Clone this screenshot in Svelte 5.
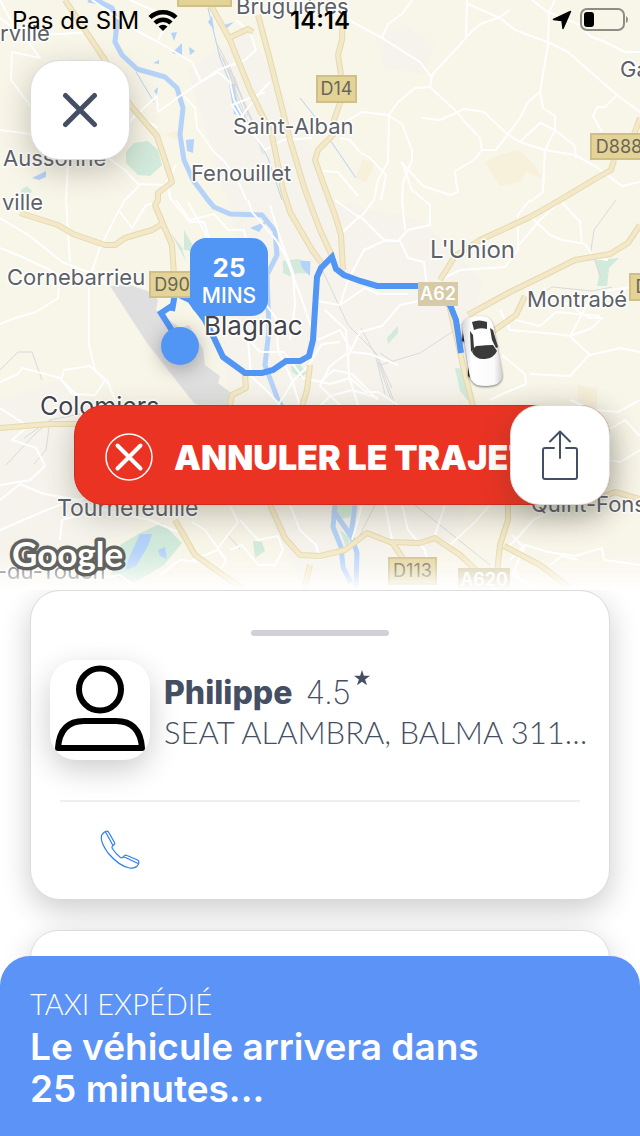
<script>
  let carrier = 'Pas de SIM';
  let time = '14:14';
  let eta = 25;
  let driver = { name: 'Philippe', rating: '4.5', vehicle: 'SEAT ALAMBRA, BALMA 311ABC' };

  const minorRoads = [
    '0,18 24,36 40,58 12,52 11,80 32,108',
    '0,0 18,34 60,34 90,32',
    '92,0 132,28 158,42 192,62 201,82',
    '130,0 170,18 158,40',
    '158,128 136,114 129,122 157,96 158,112 180,96 218,70 245,60 256,50 250,32 236,20',
    '184,96 195,108 197,128 214,152 225,162 240,185 246,200',
    '201,82 218,72 230,82 234,100 246,122 265,150 283,140 312,138',
    '265,92 232,105 240,118 262,90 270,82',
    '0,130 30,134 68,162 66,200 70,262',
    '100,152 125,170 138,184 165,185 176,165',
    '140,185 125,200 118,212 99,250 89,280 89,345 95,370 108,382 115,400',
    '0,218 30,236 62,262 88,272 110,286',
    '0,248 20,256 50,270 60,276 58,298 36,312 15,318 0,324',
    '120,212 132,228 146,205 160,202',
    '0,382 18,374 22,368 60,378 72,394 95,395 105,380 90,366 64,370 61,380 76,394',
    '0,408 28,426 12,440 36,448 45,466 30,480 0,485',
    '0,500 20,484 44,494 80,500 100,490',
    '0,530 42,512 72,500 112,512 150,520 178,532',
    '60,540 62,520 90,512 130,506 165,506',
    '167,165 170,198 190,222 204,222 210,240 225,244',
    '176,200 190,220 214,214 228,230 244,230 250,260',
    '188,202 212,246 226,252 250,252',
    '248,200 252,212 276,240 285,255 302,300 312,330',
    '270,205 280,238 293,272 295,305 290,340',
    '252,286 276,318 278,350 292,380 300,406',
    '240,330 260,352 284,352 303,378 330,384',
    '230,320 248,340 251,376 266,390 280,405',
    '278,405 294,380 308,366 322,344 340,342',
    '312,300 340,305 365,288 378,294 408,294',
    '318,340 340,330 352,352 370,354 398,365',
    '325,310 346,330 349,376 358,405',
    '330,384 350,378 366,392 378,392 398,405',
    '348,356 360,332 382,326 400,305 424,300',
    '320,382 334,370 352,374 378,400',
    '346,354 330,366 320,386 340,405',
    '340,305 348,280 364,250 386,240 400,241 408,258 424,262 428,298',
    '343,232 360,216 385,241 398,241 408,230 430,225 430,205 412,190 402,162',
    '335,200 360,218 374,200 378,180 388,162 389,115 398,102 415,88 430,87 432,75 455,50 466,38 467,0',
    '430,87 457,112 465,122 480,138 482,150 474,160 455,171 456,182 458,192 450,195 423,186 401,162',
    '381,200 386,175 370,158 360,152 350,140 340,138',
    '320,171 338,172 358,196',
    '340,125 362,112 388,115 402,124 412,150 412,160 403,182 402,200 405,230',
    '422,118 440,120 456,113 464,109 484,112 507,134 520,142 545,150 575,155 595,166 622,186 640,182',
    '482,150 496,150 508,134 520,118 528,102 540,92 548,45 549,12 555,0',
    '540,92 543,108 555,116 555,130 575,146 576,158',
    '520,142 540,123 555,130 545,150 544,170 543,192 530,202',
    '345,18 382,38 420,62 432,78',
    '382,38 388,24 402,14 412,0',
    '466,3 500,18 515,30 550,43 568,52 617,95 640,112',
    '532,0 548,12 578,24 590,36 605,42 625,52 640,52',
    '467,36 480,24 498,18 510,10',
    '617,95 605,107 597,107 593,116 602,132',
    '440,280 460,270 505,267 518,250 518,215 530,200',
    '518,246 540,220 562,200',
    '532,218 550,235 562,240 585,244 595,258 608,260',
    '582,244 580,222 560,200',
    '500,310 510,330 556,334 570,336 590,355 620,348 640,352',
    '560,300 590,318 602,318 592,328 570,336',
    '502,355 525,374 526,384 500,395 490,400',
    '530,374 570,376 590,354',
    '570,336 590,300 610,290 640,286',
    '515,320 540,326 556,312 600,316',
    '320,406 330,396 352,390 378,398',
    '570,400 595,410 618,412 640,400',
    '608,430 625,420 640,436',
    '608,460 620,462 640,450',
    '230,506 238,522 218,548 225,558 205,530 192,522',
    '240,520 258,540 278,536 283,550 275,565 258,565 242,545 230,550',
    '192,560 218,550 226,560 220,570',
    '290,505 300,530 316,545 320,560',
    '352,540 358,520 362,505',
    '385,505 392,540 400,560',
    '402,505 408,530 425,550 428,565',
    '445,505 435,535 450,545 475,522 490,505',
    '505,550 520,535 533,520 550,512',
    '510,560 525,545 548,552 575,556 602,548 604,560 640,565',
    '512,535 524,548 512,575 540,590',
    '515,570 520,580',
    '550,565 562,556 578,560',
    '160,575 180,560 200,562',
    '90,580 120,575 140,590'
  ];

  const mainRoads = [
    '65,0 105,60 130,105 157,136 165,160 172,182 158,193 158,200 155,205 163,224 172,245 175,290',
    '20,213 58,225 73,234 105,245 115,245 125,238 152,230 162,224',
    '208,0 230,40 250,90 272,135 283,190 290,212 312,250 325,268',
    '258,15 270,60 290,140 305,190 320,230 332,256',
    '229,38 248,29 253,32',
    '343,18 342,40 338,55 341,75 341,100 334,120 333,135 318,150 315,160 322,180 335,215 341,235 343,270',
    '640,118 632,140',
    '614,160 611,170 595,179 560,200 530,217 480,240 455,256 440,280',
    '640,225 628,243 610,254 575,260 545,275 510,292 468,315',
    '525,296 516,315 492,332',
    '448,300 456,335 464,370 473,406',
    '0,428 50,424 78,424',
    '175,520 195,555 230,580 245,590',
    '270,505 285,538 300,555 320,556 345,550 367,533 390,542 420,543 435,538 460,555 478,572',
    '392,542 405,562',
    '508,505 508,520 500,545 497,572',
    '504,546 540,565 570,588',
    '310,565 304,590',
    '245,375 246,388 232,395 230,405',
    '310,365 307,390 302,406',
    '600,498 615,492 640,499'
  ];

  const labels = [
    { text: 'rville', x: 0, y: 41, size: 22 },
    { text: 'Bruguières', x: 236, y: 14, size: 22 },
    { text: 'Saint-Alban', x: 233, y: 134, size: 22 },
    { text: 'Fenouillet', x: 191, y: 181, size: 22 },
    { text: 'Aussonne', x: 3, y: 166, size: 22 },
    { text: 'ville', x: 2, y: 210, size: 22 },
    { text: 'Cornebarrieu', x: 7, y: 285, size: 22 },
    { text: "L'Union", x: 430, y: 258, size: 24 },
    { text: 'Montrabé', x: 527, y: 307, size: 22 },
    { text: 'Gar', x: 620, y: 77, size: 22 },
    { text: 'Blagnac', x: 204, y: 335, size: 26, dark: true },
    { text: 'Colomiers', x: 40, y: 415, size: 25, dark: true },
    { text: 'Tournefeuille', x: 57, y: 516, size: 23 },
    { text: 'Quint-Fonsegrives', x: 531, y: 512, size: 22 },
    { text: '-du-Touch', x: -3, y: 579, size: 22 }
  ];

  const shields = [
    { text: 'D14', x: 317, y: 76, w: 39, h: 26 },
    { text: 'D888', x: 591, y: 134, w: 56, h: 25 },
    { text: 'D90', x: 150, y: 272, w: 44, h: 25 },
    { text: 'D', x: 630, y: 274, w: 24, h: 26 },
    { text: 'D113', x: 389, y: 558, w: 47, h: 26 },
    { text: 'A62', x: 418, y: 282, w: 40, h: 24, light: true },
    { text: 'A620', x: 458, y: 568, w: 52, h: 24, light: true },
    { text: '', x: 178, y: -18, w: 53, h: 24 }
  ];
</script>

<main class="screen">
  <section class="map-area">
    <svg class="map" viewBox="0 0 640 590" preserveAspectRatio="xMidYMid slice" aria-label="Carte du trajet">
      <defs>
        <linearGradient id="fade" x1="0" y1="0" x2="0" y2="1">
          <stop offset="0" stop-color="#fff" stop-opacity="0" />
          <stop offset="0.5" stop-color="#fff" stop-opacity="0.4" />
          <stop offset="1" stop-color="#fff" />
        </linearGradient>
        <linearGradient id="carBody" x1="0" x2="1">
          <stop offset="0" stop-color="#d4d4d4" />
          <stop offset="0.25" stop-color="#fff" />
          <stop offset="0.8" stop-color="#fafafa" />
          <stop offset="1" stop-color="#cfcfcf" />
        </linearGradient>
      </defs>
      <rect width="640" height="590" fill="#f8f5e9" />

      <!-- built-up areas -->
      <path class="urban" d="M188 70l60-40 60 110 24 60 90 20 60 60-20 120 20 90-60 90H300l-60-120-20-120 30-60z" />
      <path class="urban" d="M375 38l30-14 30 20-10 30-40-5zM0 400l60-20 50 30 30 120-140 40z" />

      <!-- parks -->
      <g fill="#d2eadb">
        <path d="M126 152l8-9 14-2 10 9 4 15-12 11-12-1-12-12z" />
        <path d="M21 190l6-4 5 5-4 6-7-1zM170 232l14 18 0-20 8 14 2 8-12-3 4 12z" />
        <path d="M283 261l14-2 14 3-1 12-12-1-9 3-6-3z" />
        <path d="M291 366l9-2 6 9-5 5-9-6zM595 260l24-2-10 10-2 18-10 0 2-10z" />
        <path d="M387 338l11-12 0 7-10 11zM455 368l8 1 4 12 1 20-8-10z" />
        <path d="M120 545l20-12 22-10 20 20-18 22-30 18-24-8 14-20z" />
        <path d="M332 505h22l-4 12-10 2zM340 530l10 8-3 12zM253 541l9 1 3 9-10 7z" />
      </g>
      <g fill="#f7f0da">
        <path d="M485 162l18-8 16-4 15 14 8 14-16-6-6 10-20 4z" />
        <path d="M362 160l12 2-2 8-6 12-10-4zM577 385l20 4v20l-18-4zM165 134l12-4v10z" />
      </g>

      <path class="airport" d="M110 286l20-1 20 7 8 8-2 10 24 18 9-3 14 24 2 16 15 11-2 7 13 10-3 20-33-9-5-6-43-55z" />
      <path class="airport" d="M186 390h42l-6 15-33-8z" />

      <!-- water -->
      <g fill="#b5d2f8">
        <path d="M208 22l4-6 2 14zM224 25l10-3-7 6zM171 33l6-1-3 9zM172 53l10-10v12zM189 47l6 4-5 4zM153 63l6-3v4zM154 91l4-4-1 8z" />
        <path d="M229 84h6l2 20 8 14-11-4zM186 140l8-1-1 14-6-2zM32 178l14-7v6l-7 3z" />
        <path d="M250 228l17-7-8 11zM300 261h10v15l-8-8zM128 560l12-26 12 0-4 12-12 20-10 4zM158 550l7-3 2 12-7-3z" />
      </g>
      <g class="river">
        <polyline points="88,0 100,2 112,8 117,22 115,42 122,55 137,69 165,77 177,88 183,108 180,135 184,160 193,180 208,200 214,207 230,214 262,215 275,231 277,255 267,275 269,330 265,365 278,400 283,408" />
        <path d="M335 505l-2 22 8 20 2 20 8 16M355 505l-4 30 6 18-1 35M333 510l18 26" />
      </g>
      <g class="stream">
        <path d="M136 72l18 30M208 8l12 50 20 50 28 50 14 42M330 140l26 38M283 200l26 40M300 98l16 20" />
      </g>
      <g class="rail">
        <path d="M215 40l16 30 20 50 12 34M218 50l20 40 14 30M223 58l24 62M228 66l8 30M230 70l22 50M234 76l14 40" />
        <path d="M320 265l28 60 28 28 20 54M361 328l14 26 10 40M376 354l16 34M378 362l14 40M380 365l40-12 35-23 14-12M398 365l-18-12" />
        <path d="M0 370l18-18 14 0 10 28M616 200l-22 30-3 20 10 28M540 295l12-8 40 4 20-4" />
        <path d="M24 438l26-18 30-6 M6 465l30-32 14-12M50 420l-4 30-12 14M375 505l-15 30M415 505l75 60M228 535l12 14" />
      </g>

      {#each minorRoads as points}
        <polyline class="minor" {points} />
      {/each}
      {#each mainRoads as points}
        <polyline class="main-edge" {points} />
      {/each}
      {#each mainRoads as points}
        <polyline class="main-road" {points} />
      {/each}

      <polyline class="route" points="178,340 161,313 173,305 172,311 175,293 190,300 205,320 215,340 223,357 245,373 262,373 273,370 286,361 300,361 309,356 313,340 317,277 321,268 332,257 336,269 344,275 360,281 377,286 425,286 450,305 456,320 461,353" />

      {#each shields as s}
        <rect class="shield" class:light={s.light} x={s.x} y={s.y} width={s.w} height={s.h} />
        <text class="shield-text" class:light={s.light} x={s.x + s.w / 2} y={s.y + s.h / 2 + 6}>{s.text}</text>
      {/each}
      {#each labels as l}
        <text class="place" class:dark={l.dark} x={l.x} y={l.y} font-size={l.size}>{l.text}</text>
      {/each}

      <!-- pick-up point -->
      <circle class="pin" cx="180" cy="346" r="19" />

      <!-- taxi -->
      <g class="car">
        <path d="M463 329l-1 12 3 1zM468 366l0 10 4 3z" fill="#222" />
        <path fill="url(#carBody)" d="M462 326q1-8 9-9 9-2 16 0 6 3 7 12l8 43q2 10-8 13-9 2-17 0-7-3-8-13z" />
        <path fill="#3a3a3a" d="M472 322q7-3 15 0v7q-7-2-13 1zM472 352q1-4 4-6 10-1 17-1l4 6q-3 7-12 8-9 1-13-7zM470 331l3 4 1 13-3 4zM490 328l3 2 5 17-2 1-4-8z" />
        <path fill="#fff" d="M474 332q7-3 15-1l3 13q-9 2-17 1z" />
      </g>

      <rect y="550" width="640" height="40" fill="url(#fade)" />
      <text class="google" x="12" y="567">Google</text>
    </svg>

    <div class="eta">
      <strong>{eta}</strong>
      <span>MINS</span>
    </div>

    <header class="status-bar">
      <div class="carrier">
        <span>{carrier}</span>
        <svg width="30" height="22" viewBox="0 0 30 22" aria-hidden="true">
          <g fill="none" stroke="#000" stroke-width="4.500">
            <path d="M2 8.500a18.500 18.500 0 0 1 26 0" />
            <path d="M7 14a11.500 11.500 0 0 1 16 0" />
          </g>
          <path d="M10.500 17.500a6.500 6.500 0 0 1 9 0L15 22z" />
        </svg>
      </div>
      <time>{time}</time>
      <div class="indicators">
        <svg width="20" height="20" viewBox="0 0 20 20" aria-hidden="true">
          <path stroke="#000" stroke-width="1.500" stroke-linejoin="round" d="M1.500 9.500L18.500 1.500 11 18.500 10 10.500z" />
        </svg>
        <svg width="48" height="24" viewBox="0 0 48 24" aria-hidden="true">
          <rect x="1" y="1" width="43" height="21" rx="6" fill="none" stroke="#8e8c86" stroke-width="2" />
          <rect x="4" y="4" width="10" height="15" rx="3" />
          <path d="M46 8q2 1 2 3.500T46 15z" fill="#8e8c86" />
        </svg>
      </div>
    </header>

    <button class="square close" type="button" aria-label="Fermer">
      <svg width="36" height="36" viewBox="0 0 36 36" fill="none" stroke="#454f63" stroke-width="5" stroke-linecap="round">
        <path d="M3.500 3.500l29 29M32.500 3.500l-29 29" />
      </svg>
    </button>

    <div class="actions">
      <button class="cancel" type="button">
        <svg width="48" height="48" viewBox="0 0 48 48" fill="none" stroke="#fff" stroke-linecap="round">
          <circle cx="24" cy="24" r="23" stroke-width="1.500" />
          <path d="M12.500 12.500l23 23M35.500 12.500l-23 23" stroke-width="4" />
        </svg>
        <span>ANNULER LE TRAJET</span>
      </button>
      <button class="square share" type="button" aria-label="Partager">
        <svg width="38" height="50" viewBox="0 0 38 50" fill="none" stroke="#454f63" stroke-width="2" stroke-linecap="round" stroke-linejoin="round">
          <path d="M13 18H4q-2 0-2 2v27q0 2 2 2h30q2 0 2-2V20q0-2-2-2h-9" />
          <path d="M19 28V2M9 11.500L19 1.500l10 10" />
        </svg>
      </button>
    </div>
  </section>

  <section class="sheet">
    <article class="card">
      <div class="handle"></div>
      <div class="driver">
        <div class="avatar">
          <svg width="100" height="100" viewBox="0 0 100 100" fill="none" stroke="#000" stroke-width="6">
            <circle cx="50" cy="29.500" r="21" />
            <path stroke-linejoin="round" d="M8 88Q10 61 34 61h32q24 0 26 27z" />
          </svg>
        </div>
        <div class="driver-info">
          <p class="driver-name">
            <strong>{driver.name}</strong>
            <span class="rating">{driver.rating}</span>
            <svg class="star" width="16" height="16" viewBox="0 0 16 16" aria-hidden="true">
              <path d="M8 0l1.900 5.800H16l-4.900 3.600 1.900 5.900L8 11.700l-5 3.600 1.900-5.900L0 5.800h6.100z" />
            </svg>
          </p>
          <p class="vehicle">{driver.vehicle}</p>
        </div>
      </div>
      <div class="contact">
        <button class="call" type="button" aria-label="Appeler le chauffeur">
          <svg width="40" height="40" viewBox="0 0 40 40" fill="none" stroke="#2f7df6" stroke-width="1.200" stroke-linejoin="round">
            <path d="M4 2.500Q6.500 0 8.500 2L14.500 12.500Q15.500 14 13 15.500 11 17 13 19.500 16 24 20.500 27.500 22 28.500 23.500 26.500 25 24.500 27 25.500L37.500 30Q39.500 31 38.500 34 36 39 29.500 38 19 36 8 23-1 10 2 4.500z" />
            <path d="M5.500 2L13 15.500M22.500 27.500Q24 26.500 25.500 27.500L38 33.500" />
          </svg>
        </button>
      </div>
    </article>
    <article class="card next"></article>
  </section>

  <footer class="ride-status">
    <p class="state">TAXI EXPÉDIÉ</p>
    <h1>Le véhicule arrivera dans {eta} minutes...</h1>
  </footer>
</main>

<style>
  :global(body) {
    margin: 0;
    background: #fff;
  }

  .screen {
    display: flex;
    flex-direction: column;
    min-height: 100vh;
    overflow: hidden;
    font-family: Lato, sans-serif;
    color: #454f63;
  }

  p, h1 {
    margin: 0;
  }

  svg {
    flex: none;
    display: block;
  }

  button {
    border: 0;
    padding: 0;
    font: inherit;
    cursor: pointer;
  }

  .map-area {
    position: relative;
    flex: 1 0 auto;
    display: flex;
    flex-direction: column;
    align-items: flex-start;
  }

  .map {
    position: absolute;
    inset: 0;
    width: 100%;
    height: 100%;
    font-family: Inter, sans-serif;
  }

  .urban { fill: #f6f3ec; }
  .airport { fill: #dfdfdf; }
  .river { fill: none; stroke: #b5d2f8; stroke-width: 5; stroke-linejoin: round; }
  .stream { fill: none; stroke: #b5d2f8; stroke-width: 1; }
  .rail { fill: none; stroke: #d9dadb; stroke-width: 1; }
  .minor { fill: none; stroke: #fff; stroke-width: 2; stroke-linejoin: round; }
  .main-edge { fill: none; stroke: #e6d9ae; stroke-width: 6; stroke-linejoin: round; }
  .main-road { fill: none; stroke: #f3e9c8; stroke-width: 4; stroke-linejoin: round; }
  .route { fill: none; stroke: #5195f5; stroke-width: 6; }

  .place {
    fill: #5d6167;
    stroke: #fff;
    stroke-width: 3;
    stroke-linejoin: round;
    paint-order: stroke;
  }

  .place.dark { fill: #43434b; }

  .shield { fill: #e3d397; stroke: #cfbf88; stroke-width: 2; }
  .shield.light { fill: #d6cba6; stroke: none; }

  .shield-text {
    fill: #6a6657;
    font-size: 18px;
    text-anchor: middle;
  }

  .shield-text.light { fill: #fff; font-weight: 600; }

  .pin {
    fill: #5195f5;
    filter: drop-shadow(0 4px 10px rgba(0, 0, 0, 0.3));
  }

  .car { filter: drop-shadow(0 1px 1px rgba(0, 0, 0, 0.5)); }

  .google {
    font-family: Lato, sans-serif;
    font-size: 35px;
    font-weight: 700;
    fill: #fff;
    stroke: #62625f;
    stroke-width: 7;
    stroke-linejoin: round;
    paint-order: stroke;
  }

  .eta {
    position: absolute;
    top: 238px;
    left: 190px;
    width: 78px;
    height: 78px;
    box-sizing: border-box;
    padding-top: 16px;
    border-radius: 16px;
    background: #5195f5;
    color: #fff;
    text-align: center;
    font: 500 21px/28px Inter, sans-serif;
  }

  .eta strong {
    display: block;
    font-size: 26px;
    font-weight: 700;
  }

  .status-bar {
    position: relative;
    display: grid;
    grid-template-columns: 1fr auto 1fr;
    align-items: center;
    width: 100%;
    height: 40px;
    box-sizing: border-box;
    padding: 0 12px;
    color: #000;
    font-family: Inter, sans-serif;
    font-size: 24px;
  }

  .carrier {
    display: flex;
    align-items: center;
    gap: 9px;
  }

  .status-bar time { font-weight: 600; }

  .indicators {
    display: flex;
    justify-content: flex-end;
    align-items: center;
    gap: 8px;
  }

  .square {
    position: relative;
    display: flex;
    flex: none;
    align-items: center;
    justify-content: center;
    width: 100px;
    height: 100px;
    border: 1px solid #dcdcdc;
    border-radius: 30px;
    background: #fff;
    box-shadow: 0 10px 30px rgba(69, 69, 50, 0.3);
  }

  .close { margin: 20px 0 0 30px; }

  .actions {
    position: relative;
    display: flex;
    align-self: stretch;
    margin-top: auto;
    padding: 0 30px 85px 74px;
  }

  .cancel {
    flex: 1;
    min-width: 0;
    display: flex;
    align-items: center;
    gap: 21px;
    height: 100px;
    padding: 4px 0 0 30px;
    border: 1px solid #cf2c1f;
    border-radius: 30px;
    background: #ea3323;
    box-shadow: 0 10px 30px rgba(69, 69, 50, 0.3);
    color: #fff;
    font-family: Inter, sans-serif;
    font-size: 34px;
    font-weight: 900;
    white-space: nowrap;
    overflow: hidden;
  }

  .share { margin-left: -100px; }

  .sheet {
    display: flex;
    flex-direction: column;
    gap: 30px;
    padding: 0 30px;
  }

  .card {
    border: 1px solid #dcdcdc;
    border-radius: 30px;
    background: #fff;
    box-shadow: 0 10px 30px rgba(0, 0, 0, 0.2);
  }

  .card.next { height: 54px; }

  .handle {
    width: 138px;
    height: 6px;
    margin: 39px auto 24px;
    border-radius: 3px;
    background: #d0d0d8;
  }

  .driver {
    display: flex;
    gap: 14px;
    padding: 0 18px 40px 19px;
  }

  .avatar {
    flex: none;
    border-radius: 26px;
    background: #fff;
    box-shadow: 0 10px 30px rgba(0, 0, 0, 0.2);
  }

  .driver-info {
    flex: 1;
    min-width: 0;
    padding-top: 10px;
  }

  .driver-name {
    display: flex;
    font-family: Inter, sans-serif;
    font-size: 32px;
    font-weight: 200;
    line-height: 46px;
  }

  .driver-name strong {
    font-weight: 800;
    margin-right: 13px;
  }

  .rating { margin-right: 3px; }

  .star { fill: #454f63; }

  .vehicle {
    font-size: 31px;
    font-weight: 300;
    line-height: 32px;
    white-space: nowrap;
    overflow: hidden;
    text-overflow: ellipsis;
  }

  .contact {
    margin: 0 29px;
    padding: 28px 40px 29px;
    border-top: 2px solid #efefef;
  }

  .call {
    display: block;
    background: none;
  }

  .ride-status {
    position: relative;
    margin-top: -30px;
    padding: 30px 30px 26px;
    border-radius: 30px 30px 0 0;
    background: #5c93f6;
    color: #fff;
  }

  .state {
    font-size: 29px;
    font-weight: 300;
    line-height: 36px;
  }

  h1 {
    max-width: 480px;
    padding-top: 4px;
    font-family: Inter, sans-serif;
    font-size: 37px;
    font-weight: 600;
    line-height: 42px;
  }
</style>
